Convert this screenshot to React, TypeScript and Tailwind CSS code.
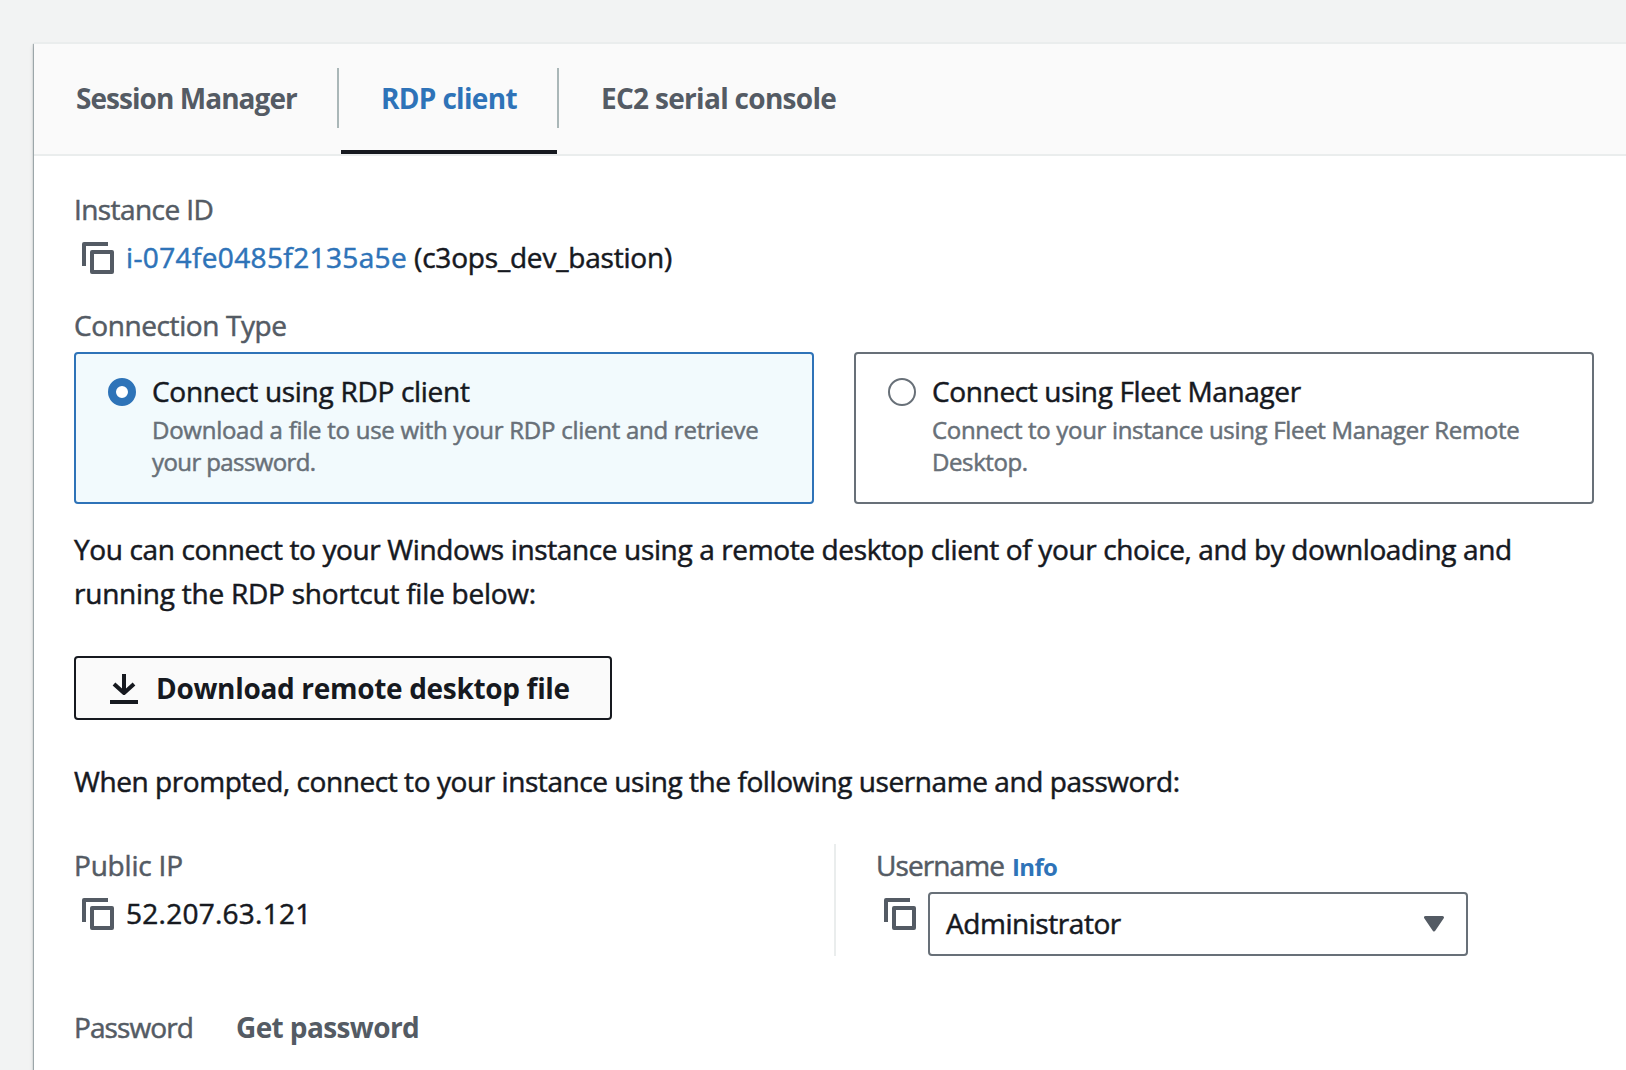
import React from 'react';

function CopyIcon({ className }: { className?: string }) {
  return (
    <svg width="32" height="32" viewBox="0 0 32 32" className={`shrink-0 ${className ?? ''}`} fill="none" stroke="#545b64" strokeWidth="4" strokeLinejoin="round">
      <path d="M2 24V2H26" />
      <rect x="10" y="10" width="20" height="20" />
    </svg>
  );
}

function DownloadIcon() {
  return (
    <svg width="28" height="32" viewBox="0 0 28 32" className="shrink-0" fill="none" stroke="#16191f" strokeWidth="4">
      <path d="M14 2V20" />
      <path d="M4 12L14 21L24 12" strokeLinejoin="round" />
      <path d="M0 30H28" />
    </svg>
  );
}

type OptionProps = {
  selected?: boolean;
  title: string;
  titleClass: string;
  lines: { text: string; className: string }[];
};

function ConnectionOption({ selected, title, titleClass, lines }: OptionProps) {
  return (
    <div
      className={`flex h-[152px] w-[740px] gap-4 rounded-[4px] border-2 pl-8 ${
        selected ? 'border-[#2e73b8] bg-[#f2fafd]' : 'border-[#687078] bg-white'
      }`}
    >
      <div
        className={`mt-6 h-7 w-7 shrink-0 rounded-full bg-white ${
          selected ? 'border-8 border-[#2e73b8]' : 'border-2 border-[#687078]'
        }`}
      />
      <div className="pt-[17px] whitespace-nowrap">
        <div className={`leading-10 ${titleClass}`}>{title}</div>
        <div className="mt-[3px] text-[24px] leading-8 text-[#687078]">
          {lines.map((l) => (
            <div key={l.text} className={l.className}>{l.text}</div>
          ))}
        </div>
      </div>
    </div>
  );
}

export default function App() {
  return (
    <div className="h-[1070px] w-[1626px] overflow-hidden bg-[#f2f3f3] pt-[42px] pl-[34px] font-['Open_Sans',sans-serif] text-[28px] whitespace-nowrap text-[#16191f] [-webkit-text-stroke:0.5px]">
      <div className="h-[1100px] w-[1640px] border-t-2 border-[#eaeded] bg-white shadow-[-1px_2px_1px_0_rgba(0,28,36,0.3),-1px_4px_4px_0_rgba(0,28,36,0.12)]">
        <div className="flex h-[112px] border-b-2 border-[#eaeded] bg-[#fafafa] font-bold text-[#545b64] [-webkit-text-stroke:0]">
          <div className="mt-6 flex h-[60px] w-[305px] items-center border-r-2 border-[#aab7b8] pl-[42px] tracking-[-0.95px]">
            Session Manager
          </div>
          <div className="flex w-[220px] flex-col">
            <div className="mt-6 flex h-[60px] items-center border-r-2 border-[#aab7b8] pl-[42px] tracking-[-0.67px] text-[#2e73b8]">
              RDP client
            </div>
            <div className="mt-[22px] ml-[2px] h-1 w-[216px] bg-[#16191f]" />
          </div>
          <div className="mt-6 flex h-[60px] items-center pl-[42px] tracking-[-0.7px]">EC2 serial console</div>
        </div>

        <div className="flex flex-col items-start pl-10">
          <div className="mt-[33px] leading-10 tracking-[-0.58px] text-[#545b64]">Instance ID</div>
          <div className="mt-2 flex leading-10">
            <CopyIcon className="mt-[5px] mr-3 ml-2" />
            <span className="tracking-[0.37px] text-[#2e73b8]">i-074fe0485f2135a5e</span>
            <span className="ml-[7px] tracking-[-0.2px]">(c3ops_dev_bastion)</span>
          </div>

          <div className="mt-7 leading-10 tracking-[-0.4px] text-[#545b64]">Connection Type</div>
          <div className="mt-[7px] flex gap-10">
            <ConnectionOption
              selected
              title="Connect using RDP client"
              titleClass="tracking-[-0.29px]"
              lines={[
                { text: 'Download a file to use with your RDP client and retrieve', className: 'tracking-[-0.26px]' },
                { text: 'your password.', className: 'tracking-[-0.6px]' },
              ]}
            />
            <ConnectionOption
              title="Connect using Fleet Manager"
              titleClass="tracking-[-0.36px]"
              lines={[
                { text: 'Connect to your instance using Fleet Manager Remote', className: 'tracking-[-0.33px]' },
                { text: 'Desktop.', className: 'tracking-[-0.4px]' },
              ]}
            />
          </div>

          <div className="mt-[23px] leading-[44px]">
            <div className="tracking-[-0.37px]">
              You can connect to your Windows instance using a remote desktop client of your choice, and by downloading and
            </div>
            <div className="tracking-[-0.24px]">running the RDP shortcut file below:</div>
          </div>

          <button className="mt-[41px] flex h-16 w-[538px] items-center rounded-[4px] border-2 border-[#16191f] bg-[#fafafa] pl-[34px] font-bold [-webkit-text-stroke:0]">
            <DownloadIcon />
            <span className="ml-[18px] tracking-[-0.32px]">Download remote desktop file</span>
          </button>

          <div className="mt-[39px] leading-[44px] tracking-[-0.43px]">
            When prompted, connect to your instance using the following username and password:
          </div>

          <div className="mt-[41px] flex h-[112px]">
            <div className="w-[760px] pt-px leading-10">
              <div className="tracking-[-0.2px] text-[#545b64]">Public IP</div>
              <div className="mt-2 flex">
                <CopyIcon className="mt-[5px] mr-3 ml-2" />
                <span className="tracking-[0.25px]">52.207.63.121</span>
              </div>
            </div>
            <div className="border-l-2 border-[#eaeded] pt-px pl-10 leading-10">
              <div className="flex h-10 items-baseline text-[#545b64]">
                <span className="tracking-[-0.9px]">Username</span>
                <span className="ml-2 text-[24px] font-bold tracking-[-0.7px] text-[#2e73b8] [-webkit-text-stroke:0]">Info</span>
              </div>
              <div className="mt-[7px] flex">
                <CopyIcon className="mt-[6px] mr-3 ml-2" />
                <div className="flex h-16 w-[540px] items-center justify-between rounded-[4px] border-2 border-[#687078] bg-white pr-[22px] pl-4">
                  <span className="pb-[2px] tracking-[-0.45px]">Administrator</span>
                  <svg width="20" height="16" viewBox="0 0 20 16" fill="#545b64" stroke="#545b64" strokeWidth="3" strokeLinejoin="round">
                    <path d="M1.5 1.5H18.5L10 14Z" />
                  </svg>
                </div>
              </div>
            </div>
          </div>

          <div className="mt-[51px] flex leading-10 text-[#545b64]">
            <span className="w-[162px] tracking-[-0.9px]">Password</span>
            <span className="font-bold tracking-[-0.61px] [-webkit-text-stroke:0]">Get password</span>
          </div>
        </div>
      </div>
    </div>
  );
}
